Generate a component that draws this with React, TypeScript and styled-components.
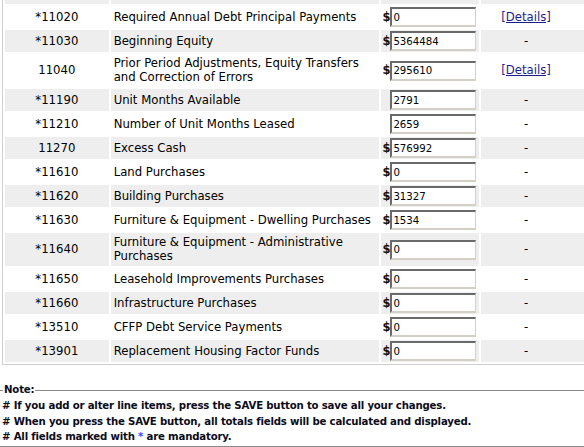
import styled, { createGlobalStyle } from "styled-components";

const GlobalStyle = createGlobalStyle`
    html, body {
        margin: 0;
        padding: 0;
        background: #ffffff;
        overflow: hidden;
    }
    body {
        font-family: "DejaVu Sans", Verdana, sans-serif;
        font-size: 11.7px;
        color: #000000;
    }
`;

type Row = {
    code: string;
    required: boolean;
    label: string[];
    value: string;
    dollar: boolean;
    details: boolean;
};

const rows: Row[] = [
    {code: "11020", required: true, label: ["Required Annual Debt Principal Payments"], value: "0", dollar: true, details: true},
    {code: "11030", required: true, label: ["Beginning Equity"], value: "5364484", dollar: true, details: false},
    {code: "11040", required: false, label: ["Prior Period Adjustments, Equity Transfers", "and Correction of Errors"], value: "295610", dollar: true, details: true},
    {code: "11190", required: true, label: ["Unit Months Available"], value: "2791", dollar: false, details: false},
    {code: "11210", required: true, label: ["Number of Unit Months Leased"], value: "2659", dollar: false, details: false},
    {code: "11270", required: false, label: ["Excess Cash"], value: "576992", dollar: true, details: false},
    {code: "11610", required: true, label: ["Land Purchases"], value: "0", dollar: true, details: false},
    {code: "11620", required: true, label: ["Building Purchases"], value: "31327", dollar: true, details: false},
    {code: "11630", required: true, label: ["Furniture & Equipment - Dwelling Purchases"], value: "1534", dollar: true, details: false},
    {code: "11640", required: true, label: ["Furniture & Equipment - Administrative", "Purchases"], value: "0", dollar: true, details: false},
    {code: "11650", required: true, label: ["Leasehold Improvements Purchases"], value: "0", dollar: true, details: false},
    {code: "11660", required: true, label: ["Infrastructure Purchases"], value: "0", dollar: true, details: false},
    {code: "13510", required: true, label: ["CFFP Debt Service Payments"], value: "0", dollar: true, details: false},
    {code: "13901", required: true, label: ["Replacement Housing Factor Funds"], value: "0", dollar: true, details: false},
];

export default function App() {
    return (
        <Page>
            <GlobalStyle/>
            <LineTable>
                <colgroup>
                    <col style={{width: 103}}/>
                    <col style={{width: 267}}/>
                    <col style={{width: 97}}/>
                    <col style={{width: 150}}/>
                </colgroup>
                <tbody>
                    <HeaderRow>
                        <Cell $shade/>
                        <HeaderCell $shade>Home Account Information</HeaderCell>
                        <Cell $shade/>
                        <Cell $shade/>
                    </HeaderRow>
                    {rows.map((row, i) => {
                        const shade = i % 2 === 1;
                        return (
                            <tr key={row.code}>
                                <CodeCell $shade={shade}>{row.required ? "*" : ""}{row.code}</CodeCell>
                                <LabelCell $shade={shade}>
                                    {row.label.map((line) => (
                                        <LabelLine key={line}>{line}</LabelLine>
                                    ))}
                                </LabelCell>
                                <InputCell $shade={shade}>
                                    <AmountBox>
                                        <Dollar $hidden={!row.dollar}>$</Dollar>
                                        <Amount type="text" defaultValue={row.value}/>
                                    </AmountBox>
                                </InputCell>
                                <ActionCell $shade={shade}>
                                    <ActionBox>
                                        {row.details ? <DetailsLink href="#">[Details]</DetailsLink> : "-"}
                                    </ActionBox>
                                </ActionCell>
                            </tr>
                        );
                    })}
                </tbody>
            </LineTable>

            <NoteBox>
                <NoteLegend>Note:</NoteLegend>
                <NoteLine># If you add or alter line items, press the SAVE button to save all your changes.</NoteLine>
                <NoteLine># When you press the SAVE button, all totals fields will be calculated and displayed.</NoteLine>
                <NoteLine># All fields marked with <Star>*</Star> are mandatory.</NoteLine>
            </NoteBox>
        </Page>
    );
}

const Page = styled.div`
    width: 584px;
    height: 447px;
    overflow: hidden;
`;

const LineTable = styled.table`
    table-layout: fixed;
    width: 633px;
    margin: -21px 0 0 2px;
    border: 1px solid #cfcfcf;
    border-spacing: 2px;
`;

const HeaderRow = styled.tr`
    height: 22px;
`;

const Cell = styled.td<{ $shade?: boolean }>`
    padding: 1px 3px;
    background: ${(p) => (p.$shade ? "#eeeeee" : "#ffffff")};
    vertical-align: middle;
    line-height: 15px;
`;

const HeaderCell = styled(Cell)`
    font-weight: bold;
`;

const CodeCell = styled(Cell)`
    text-align: center;
`;

const LabelCell = styled(Cell)`
    padding: 2px 3px 3px 3px;
`;

const LabelLine = styled.div`
    white-space: nowrap;
    line-height: 14px;
`;

const InputCell = styled(Cell)`
    padding: 1px 1px 1px 1px;
`;

const AmountBox = styled.div`
    display: flex;
    align-items: center;
`;

const Dollar = styled.span<{ $hidden: boolean }>`
    flex: 0 0 8px;
    width: 8px;
    overflow: visible;
    font-weight: bold;
    font-size: 11.5px;
    color: #1a1208;
    visibility: ${(p) => (p.$hidden ? "hidden" : "visible")};
`;

const Amount = styled.input`
    box-sizing: border-box;
    width: 86px;
    height: 20px;
    margin: 0;
    padding: 0 1px;
    font-family: "DejaVu Sans", Verdana, sans-serif;
    font-size: 10.2px;
    color: #000000;
    background: #ffffff;
    border-style: solid;
    border-width: 2px 1px 2px 2px;
    border-color: #6a6a6a #d4d0c8 #d4d0c8 #6a6a6a;
    outline: none;
`;

const ActionCell = styled(Cell)`
    padding: 1px 0;
`;

const ActionBox = styled.div`
    width: 90px;
    text-align: center;
`;

const DetailsLink = styled.a`
    color: #1c1c8f;
    text-decoration: underline;
`;

const NoteBox = styled.fieldset`
    margin: 18px 0 0 0;
    padding: 1px 2px 1px 2px;
    border-style: solid;
    border-color: #8a8a8a;
    border-width: 1px 0;
    font-size: 10.2px;
    letter-spacing: -0.2px;
    font-weight: bold;
    color: #0c0c1a;
`;

const NoteLegend = styled.legend`
    padding: 0 1px;
    margin-left: 1px;
    line-height: 14px;
`;

const NoteLine = styled.div`
    line-height: 15.5px;
    white-space: nowrap;
`;

const Star = styled.span`
    color: #2b4cff;
`;
